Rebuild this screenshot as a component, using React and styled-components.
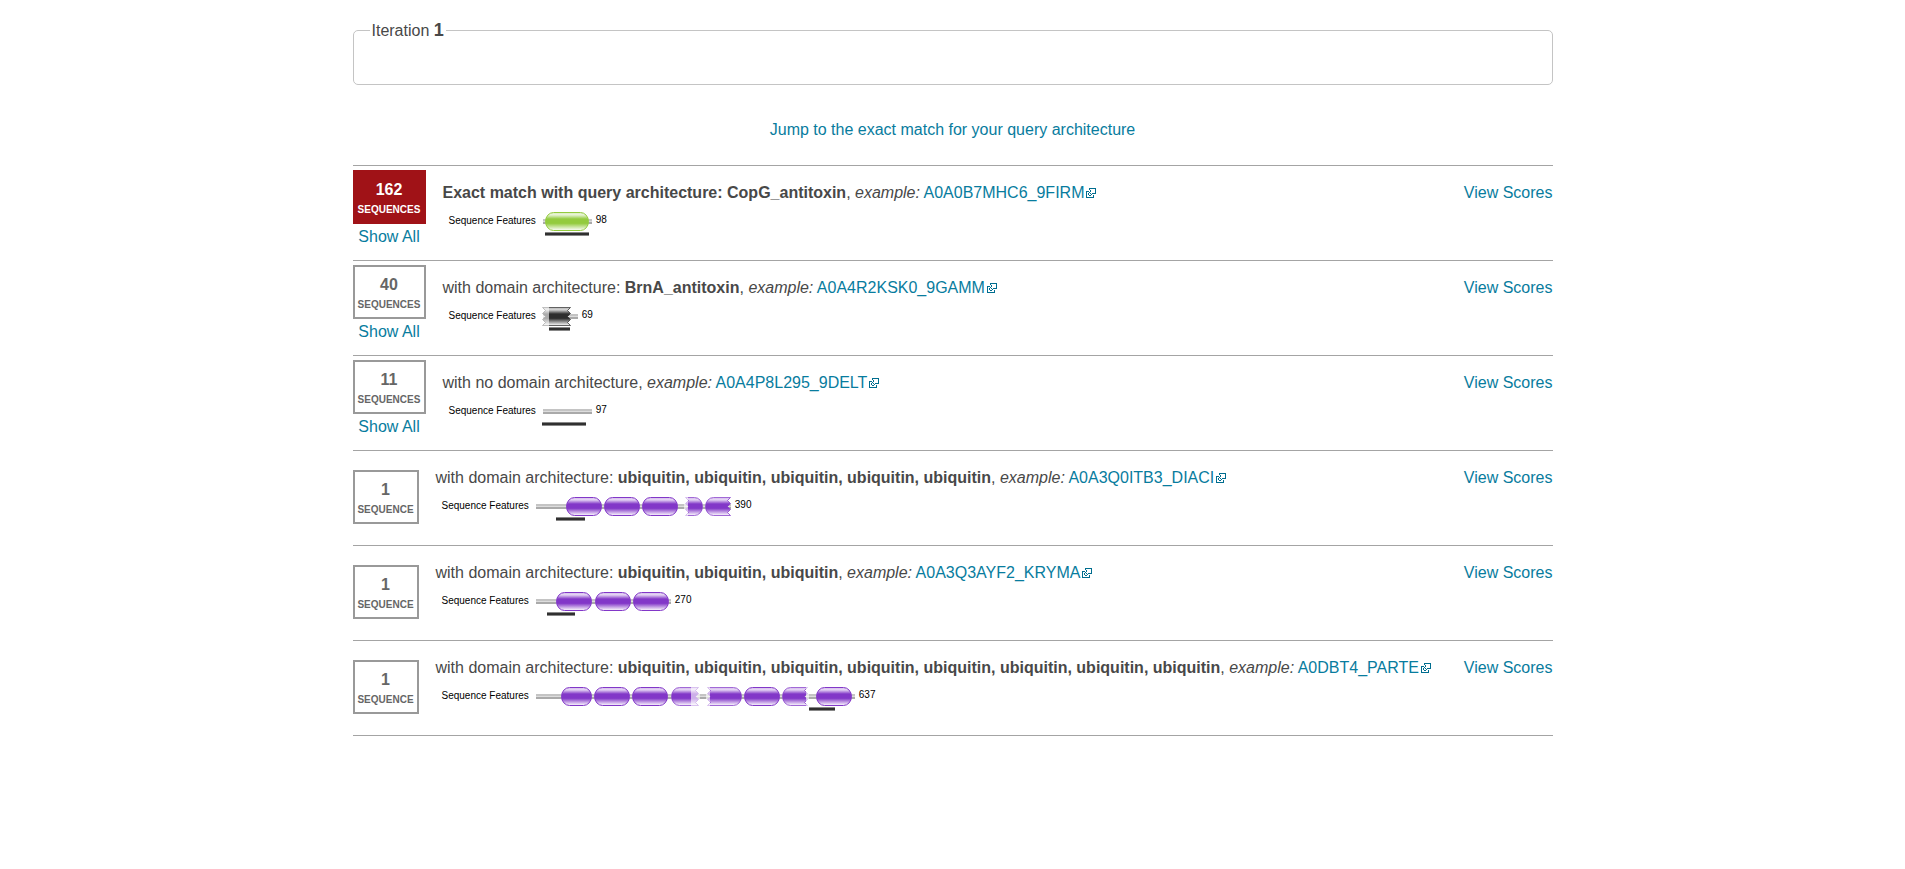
import React, { useId } from "react";
import styled, { createGlobalStyle, css } from "styled-components";

const GlobalStyle = createGlobalStyle`
  *, *::before, *::after { box-sizing: border-box; }
  body {
    margin: 0;
    background: #fff;
    color: #484848;
    font-family: "Liberation Sans", Arial, Helvetica, sans-serif;
    font-size: 16px;
    line-height: 24px;
  }
`;

const Page = styled.main`
  max-width: 1200px;
  margin: 0 auto;
  padding: 18px 0 40px;
`;

const IterationBox = styled.fieldset`
  height: 67px;
  margin: 0;
  padding: 0 16px;
  border: 1px solid #c4c4c4;
  border-radius: 5px;
`;

const IterationLegend = styled.legend`
  padding: 0 2px;
  line-height: 24px;
`;

const IterationNumber = styled.strong`
  font-size: 18px;
`;

const Link = styled.a`
  color: #087c9e;
  text-decoration: none;
  white-space: nowrap;
  &:hover { text-decoration: underline; }
`;

const JumpLine = styled.p`
  margin: 33px 0 23px;
  text-align: center;
`;

const ResultList = styled.ul`
  margin: 0;
  padding: 0;
  list-style: none;
  border-top: 1px solid #a4a4a4;
`;

const ResultRow = styled.li`
  display: flex;
  gap: 17px;
  min-height: 95px;
  border-bottom: 1px solid #a4a4a4;
`;

const CountColumn = styled.div`
  display: flex;
  flex: none;
  flex-direction: column;
  align-items: center;
  gap: 1px;
  padding-top: ${(p) => (p.$single ? 19 : 4)}px;
`;

const CountBadge = styled.div`
  width: ${(p) => (p.$single ? 66 : 73)}px;
  padding: 6px 0 4px;
  border: 2px solid #999;
  color: #666;
  font-weight: bold;
  text-align: center;
  ${(p) =>
    p.$exact &&
    css`
      border-color: #a01217;
      background: #a01217;
      color: #fff;
    `}
`;

const CountValue = styled.div`
  line-height: 24px;
`;

const CountUnit = styled.div`
  font-size: 10px;
  line-height: 16px;
`;

const Details = styled.div`
  flex: 1;
  min-width: 0;
  padding-top: 15px;
`;

const Scores = styled.div`
  flex: none;
  padding-top: 15px;
`;

const Description = styled.p`
  margin: 0;
`;

const Features = styled.figure`
  display: flex;
  align-items: flex-start;
  margin: 6px 0 0;
  padding-left: 6px;
  color: #000;
  font-size: 10px;
`;

const FeaturesLabel = styled.figcaption`
  margin-right: 7px;
  line-height: 20px;
`;

const SequenceLength = styled.span`
  margin-left: 4px;
  line-height: 18px;
`;

const Graphic = styled.svg`
  flex: none;
  margin-top: 1px;
  overflow: visible;
`;

const IconGraphic = styled.svg`
  margin-left: 2px;
  vertical-align: 0;
  color: #006d8f;
`;

const ExternalIcon = () => (
  <IconGraphic
    width="10"
    height="10"
    viewBox="0 0 10 10"
    fill="none"
    stroke="currentColor"
    shapeRendering="crispEdges"
    aria-hidden="true"
  >
    <path d="M3 3.5H.5V9.5H7.5V7" />
    <path d="M3.5 2V.5H9.5V5.5H8" />
    <path d="M4 2.5h1M4 3.5h1M3 4.5h1M2 5.5h1M2 6.5h1M3 7.5h1M4 7.5h1M5 6.5h1M6 5.5h1M7 5.5h1M4 5.5h1" />
  </IconGraphic>
);

const HEIGHT = 18;
const TOOTH = HEIGHT / 6;

// Outline of a domain: each end is either rounded or torn into three teeth.
function domainPath(x1, x2, leftTorn, rightTorn) {
  const top = 0.5;
  const bottom = top + HEIGHT;
  const r = Math.min(8, (x2 - x1) / 2);
  let d = `M${leftTorn ? x1 : x1 + r} ${top}`;
  if (rightTorn) {
    d += `H${x2}`;
    for (let i = 1; i <= 6; i += 1) d += `L${i % 2 ? x2 - 3 : x2} ${top + i * TOOTH}`;
  } else {
    d += `H${x2 - r}A${r} ${HEIGHT / 2} 0 0 1 ${x2 - r} ${bottom}`;
  }
  if (leftTorn) {
    d += `H${x1}`;
    for (let i = 5; i >= 0; i -= 1) d += `L${i % 2 ? x1 + 3 : x1} ${top + i * TOOTH}`;
  } else {
    d += `H${x1 + r}A${r} ${HEIGHT / 2} 0 0 1 ${x1 + r} ${top}`;
  }
  return `${d}Z`;
}

function SequenceGraphic({ length, color, domains, match }) {
  const id = useId();
  const width = Math.round(length / 2);
  return (
    <Graphic width={width} height="24" viewBox={`0 0 ${width} 24`} aria-hidden="true">
      <defs>
        <linearGradient id={id} x1="0" y1="0" x2="0" y2="1">
          <stop offset="0" stopColor="#fff" />
          <stop offset=".12" stopColor={color} stopOpacity=".18" />
          <stop offset=".36" stopColor={color} />
          <stop offset=".6" stopColor={color} />
          <stop offset="1" stopColor="#fff" />
        </linearGradient>
      </defs>
      <g shapeRendering="crispEdges">
        <rect y="7" width={width} height="5" fill="#ddd" />
        <rect y="7" width={width} height="2" fill="#c4c4c4" />
        <rect y="10" width={width} height="2" fill="#aaa" />
      </g>
      {domains.map(({ from, to, leftTorn, rightTorn, fadeLeft, fadeRight }) => {
        const shape = domainPath(from + 0.5, to - 0.5, leftTorn, rightTorn);
        const torn = leftTorn || rightTorn;
        return (
          <g key={from}>
            <path d={shape} fill="#fff" />
            <path
              d={shape}
              fill={`url(#${id})`}
              stroke={color}
              strokeWidth="1"
              strokeOpacity={torn ? 0.75 : 1}
            />
            {fadeLeft && <rect x={from - 1} width={fadeLeft + 1} height="19" fill="#fff" opacity=".6" />}
            {fadeRight && <rect x={to - fadeRight} width={fadeRight + 1} height="19" fill="#fff" opacity=".6" />}
          </g>
        );
      })}
      <rect x={match[0]} y="20" width={match[1] - match[0]} height="4" fill="#888" />
      <rect x={match[0]} y="21" width={match[1] - match[0]} height="2" fill="#303030" />
    </Graphic>
  );
}

const PURPLE = "#8237c8";

const RESULTS = [
  {
    count: 162,
    exact: true,
    names: ["CopG_antitoxin"],
    accession: "A0A0B7MHC6_9FIRM",
    length: 98,
    color: "#93cb3e",
    domains: [{ from: 2, to: 46 }],
    match: [2, 46],
  },
  {
    count: 40,
    names: ["BrnA_antitoxin"],
    accession: "A0A4R2KSK0_9GAMM",
    length: 69,
    color: "#2e2e2e",
    domains: [{ from: -1, to: 28, leftTorn: true, rightTorn: true, fadeLeft: 7 }],
    match: [6, 27],
  },
  {
    count: 11,
    names: [],
    accession: "A0A4P8L295_9DELT",
    length: 97,
    color: PURPLE,
    domains: [],
    match: [-1, 43],
  },
  {
    count: 1,
    names: Array(5).fill("ubiquitin"),
    accession: "A0A3Q0ITB3_DIACI",
    length: 390,
    color: PURPLE,
    domains: [
      { from: 30, to: 66 },
      { from: 68, to: 104 },
      { from: 106, to: 142 },
      { from: 149, to: 167, leftTorn: true, fadeLeft: 3 },
      { from: 169, to: 195, rightTorn: true },
    ],
    match: [20, 49],
  },
  {
    count: 1,
    names: Array(3).fill("ubiquitin"),
    accession: "A0A3Q3AYF2_KRYMA",
    length: 270,
    color: PURPLE,
    domains: [
      { from: 20, to: 56 },
      { from: 59, to: 95 },
      { from: 97, to: 133 },
    ],
    match: [11, 39],
  },
  {
    count: 1,
    names: Array(8).fill("ubiquitin"),
    accession: "A0DBT4_PARTE",
    length: 637,
    color: PURPLE,
    domains: [
      { from: 25, to: 56 },
      { from: 58, to: 94 },
      { from: 96, to: 132 },
      { from: 135, to: 163, rightTorn: true, fadeRight: 8 },
      { from: 171, to: 206, leftTorn: true, fadeLeft: 3 },
      { from: 208, to: 244 },
      { from: 246, to: 272, rightTorn: true, fadeRight: 2 },
      { from: 280, to: 316 },
    ],
    match: [273, 299],
  },
];

function Architecture({ exact, names }) {
  if (names.length === 0) return "with no domain architecture";
  if (exact) return <strong>Exact match with query architecture: {names.join(", ")}</strong>;
  return (
    <>
      with domain architecture: <strong>{names.join(", ")}</strong>
    </>
  );
}

function Result({ count, exact, names, accession, length, color, domains, match }) {
  const single = count === 1;
  return (
    <ResultRow id={exact ? "exact-match" : undefined}>
      <CountColumn $single={single}>
        <CountBadge $exact={exact} $single={single}>
          <CountValue>{count}</CountValue>
          <CountUnit>{single ? "SEQUENCE" : "SEQUENCES"}</CountUnit>
        </CountBadge>
        {!single && <Link href="#all">Show All</Link>}
      </CountColumn>
      <Details>
        <Description>
          <Architecture exact={exact} names={names} />, <em>example:</em>{" "}
          <Link href={`#${accession}`}>
            {accession}
            <ExternalIcon />
          </Link>
        </Description>
        <Features>
          <FeaturesLabel>Sequence Features</FeaturesLabel>
          <SequenceGraphic length={length} color={color} domains={domains} match={match} />
          <SequenceLength>{length}</SequenceLength>
        </Features>
      </Details>
      <Scores>
        <Link href="#scores">View Scores</Link>
      </Scores>
    </ResultRow>
  );
}

export default function App() {
  return (
    <>
      <GlobalStyle />
      <Page>
        <IterationBox>
          <IterationLegend>
            Iteration <IterationNumber>1</IterationNumber>
          </IterationLegend>
        </IterationBox>
        <JumpLine>
          <Link href="#exact-match">Jump to the exact match for your query architecture</Link>
        </JumpLine>
        <ResultList>
          {RESULTS.map((result) => (
            <Result key={result.accession} {...result} />
          ))}
        </ResultList>
      </Page>
    </>
  );
}
